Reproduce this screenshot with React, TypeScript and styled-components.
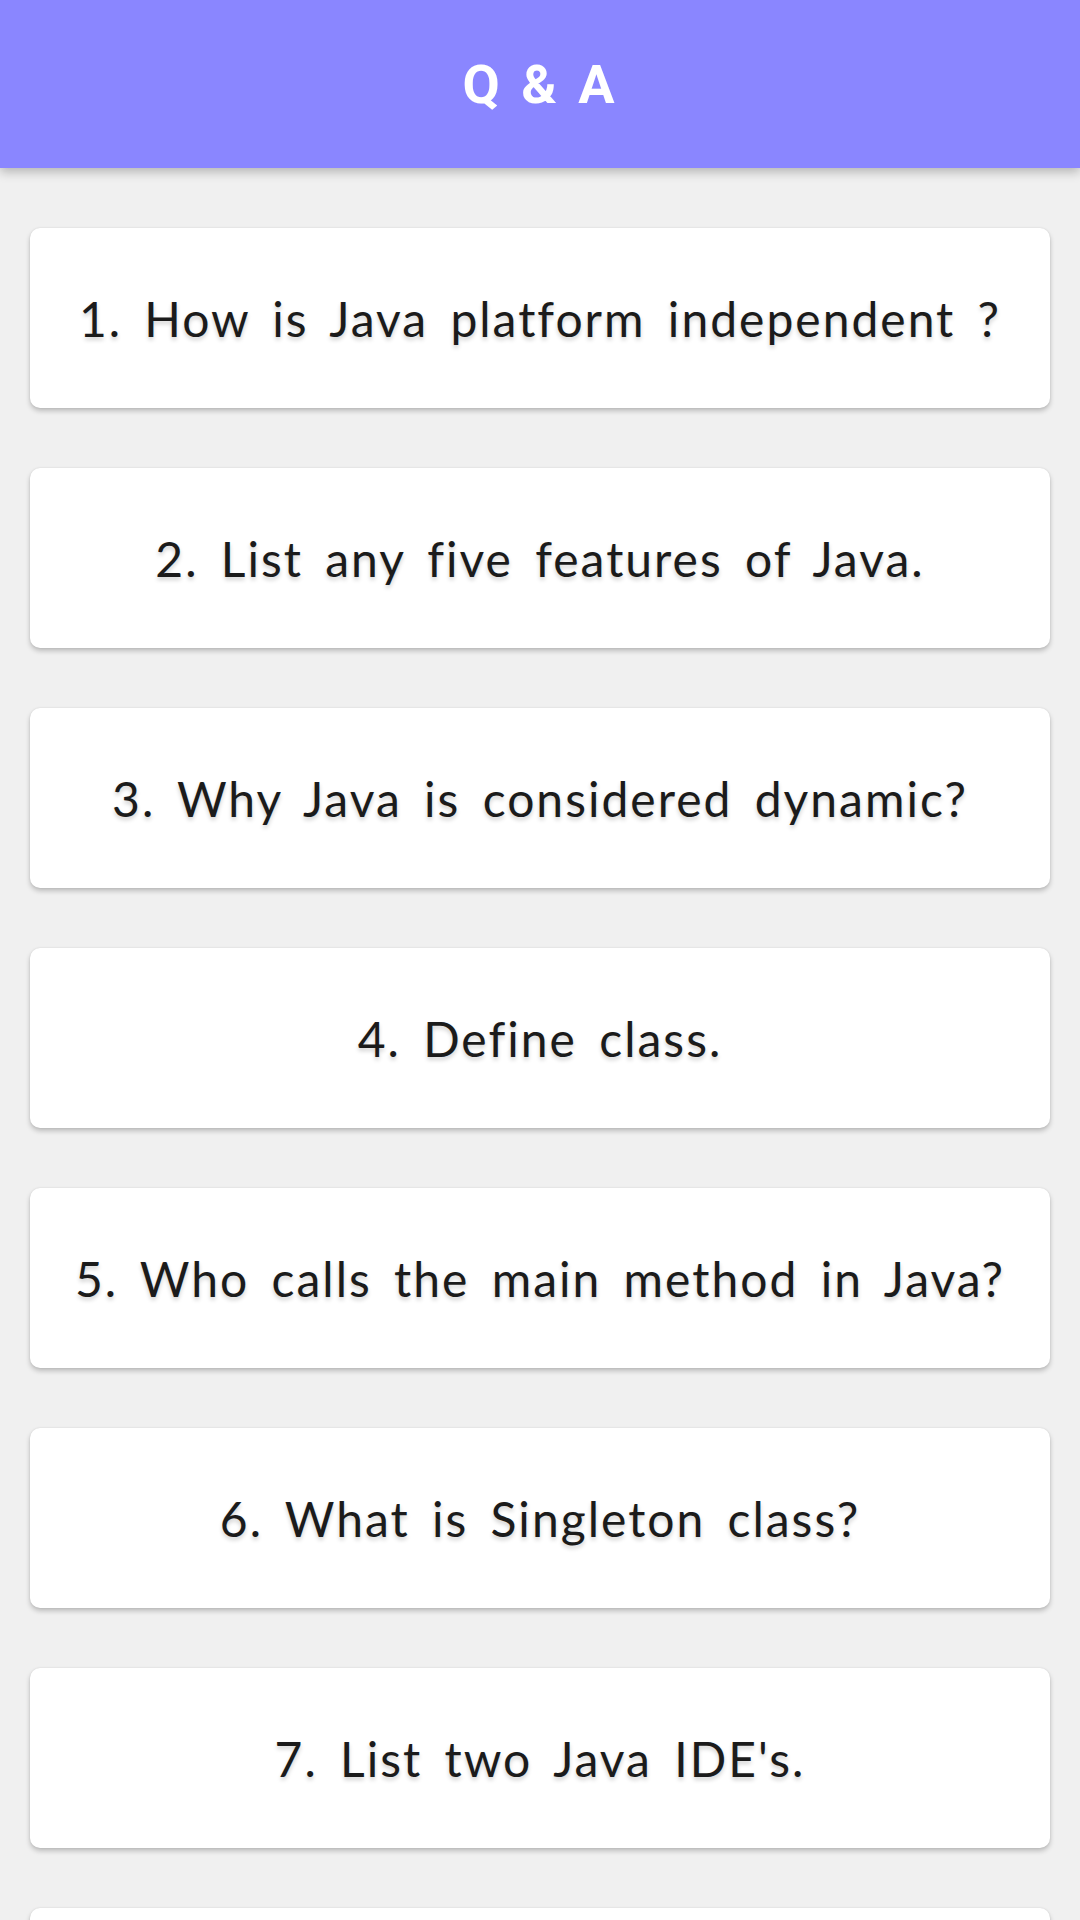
import React from 'react';
import styled, { createGlobalStyle } from 'styled-components';

const GlobalStyle = createGlobalStyle`
  html, body {
    margin: 0;
    padding: 0;
    background: #f0f0f0;
  }
  * {
    box-sizing: border-box;
  }
`;

// the last card is only peeking in at the bottom edge
const questions = [
  '1. How is Java platform independent ?',
  '2. List any five features of Java.',
  '3. Why Java is considered dynamic?',
  '4. Define class.',
  '5. Who calls the main method in Java?',
  '6. What is Singleton class?',
  "7. List two Java IDE's.",
  '',
];

const Screen = styled.div`
  width: 1080px;
  height: 1920px;
  overflow: hidden;
  background: #f0f0f0;
  display: flex;
  flex-direction: column;
`;

const AppBar = styled.header`
  flex: none;
  height: 168px;
  background: #8a86ff;
  display: flex;
  align-items: center;
  justify-content: center;
  box-shadow: 0 4px 10px rgba(0, 0, 0, 0.25);
  position: relative;
  z-index: 1;
`;

const AppTitle = styled.h1`
  margin: 0;
  color: #ffffff;
  font-family: Roboto, 'Liberation Sans', sans-serif;
  font-weight: 700;
  font-size: 54px;
  letter-spacing: 3px;
  word-spacing: 2px;
`;

const List = styled.main`
  display: flex;
  flex-direction: column;
  gap: 60px;
  padding: 60px 30px 0;
`;

const Card = styled.div`
  flex: none;
  height: 180px;
  background: #ffffff;
  border-radius: 10px;
  box-shadow: 0 3px 5px rgba(0, 0, 0, 0.22), 0 0 2px rgba(0, 0, 0, 0.1);
  display: flex;
  align-items: center;
  justify-content: center;
`;

const Question = styled.span`
  color: #1b1b1b;
  font-family: Lato, 'Noto Sans', sans-serif;
  font-size: 48px;
  font-weight: 400;
  word-spacing: 8px;
  letter-spacing: 2px;
  text-shadow: 0 3px 4px rgba(0, 0, 0, 0.18);
  white-space: nowrap;
`;

export default function App() {
  return (
    <Screen>
      <GlobalStyle />
      <AppBar>
        <AppTitle>Q &amp; A</AppTitle>
      </AppBar>
      <List>
        {questions.map((q, i) => (
          <Card key={i}>{q && <Question>{q}</Question>}</Card>
        ))}
      </List>
    </Screen>
  );
}
